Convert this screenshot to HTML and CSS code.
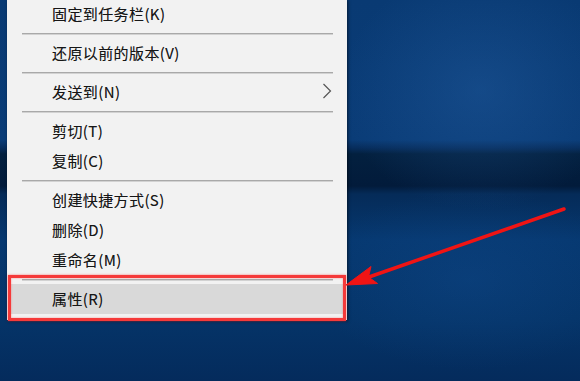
FILE: index.html
```html
<!DOCTYPE html>
<html lang="zh-CN">
<head>
<meta charset="utf-8">
<title>右键菜单</title>
<link rel="stylesheet" href="styles.css">
</head>
<body>
<div class="desk">
  <div class="menu">
    <div class="item">固定到任务栏(K)</div>
    <div class="sep"><span class="line"></span></div>
    <div class="item">还原以前的版本(V)</div>
    <div class="sep"><span class="line"></span></div>
    <div class="item sub"><span>发送到(N)</span>
      <svg class="chev" width="10" height="16" viewBox="0 0 10 16"><polyline points="1.5,1 8.5,8 1.5,15" fill="none" stroke="#555" stroke-width="1.2"/></svg>
    </div>
    <div class="sep"><span class="line"></span></div>
    <div class="item">剪切(T)</div>
    <div class="item">复制(C)</div>
    <div class="sep"><span class="line"></span></div>
    <div class="item">创建快捷方式(S)</div>
    <div class="item">删除(D)</div>
    <div class="item">重命名(M)</div>
    <div class="sep"><span class="line"></span></div>
    <div class="item hot">属性(R)</div>
  </div>
</div>
<div class="mark"></div>
<svg class="arrow" width="580" height="381" viewBox="0 0 580 381">
  <line x1="564" y1="209" x2="369" y2="277" stroke="#f01414" stroke-width="3.5" stroke-linecap="round"/>
  <polygon points="346,285 371,266.5 368.5,277 377.5,283.5" fill="#f01414" stroke="#f01414" stroke-width="1" stroke-linejoin="round"/>
</svg>
</body>
</html>
```
FILE: styles.css
```css
html, body {
  margin: 0;
  padding: 0;
}
body {
  width: 580px;
  height: 381px;
  overflow: hidden;
  position: relative;
  font-family: "Noto Sans CJK SC", "Microsoft YaHei", sans-serif;
  background:
    radial-gradient(ellipse 140px 120px at 480px 90px, rgba(40, 100, 170, 0.35), rgba(40, 100, 170, 0) 100%),
    radial-gradient(ellipse 160px 90px at 470px 280px, rgba(20, 80, 150, 0.3), rgba(20, 80, 150, 0) 100%),
    linear-gradient(180deg,
      #093a73 0px, #0a3c77 140px, #072d5c 148px, #03203f 154px,
      #021b3b 186px, #052b58 194px, #063870 240px, #053468 320px, #042b5c 381px);
}
.desk {
  display: flex;
  padding-left: 7px;
}
.menu {
  width: 340px;
  margin-top: -1px;
  padding-bottom: 6px;
  background: #f2f2f2;
  box-shadow: 1px 1px 3px rgba(0, 0, 0, 0.55);
  display: flex;
  flex-direction: column;
}
.item {
  height: 30px;
  box-sizing: border-box;
  padding-bottom: 2px;
  display: flex;
  align-items: center;
  padding-left: 45px;
  padding-right: 15px;
  font-size: 15px;
  letter-spacing: 0.4px;
  color: #161616;
  text-shadow: 0 0 0.6px rgba(0, 0, 0, 0.35);
}
.item.sub {
  justify-content: space-between;
}
.chev {
  display: block;
}
.item.hot {
  background: #d9d9d9;
  margin: 0 2px;
  padding-left: 43px;
}
.sep {
  height: 9px;
  display: flex;
  align-items: center;
  padding: 0 14px 0 15px;
}
.line {
  flex: 1;
  height: 1px;
  background: #a9a9a9;
  box-shadow: 0 1px 0 #d2d2d2;
}
.mark {
  position: absolute;
  left: 8px;
  top: 275px;
  width: 338px;
  height: 46px;
  box-sizing: border-box;
  border: 3px solid #f53a3a;
  box-shadow: 0 0 2px rgba(255, 40, 40, 0.6), inset 0 0 2px rgba(255, 40, 40, 0.5);
}
.arrow {
  position: absolute;
  left: 0;
  top: 0;
}
```
